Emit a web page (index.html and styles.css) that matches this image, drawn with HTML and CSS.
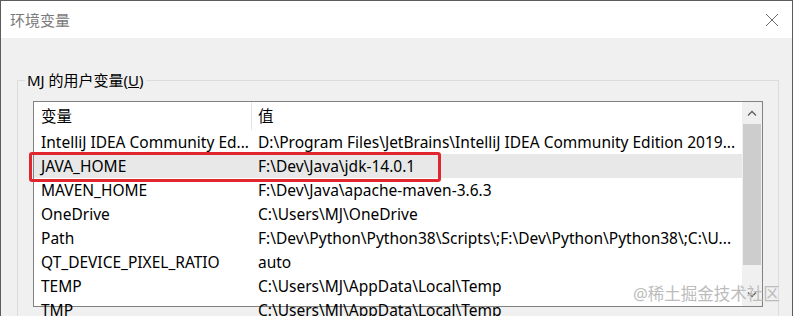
FILE: index.html
```html
<!DOCTYPE html>
<html lang="zh-CN">
<head>
  <meta charset="UTF-8" />
  <meta name="viewport" content="width=device-width, initial-scale=1.0" />
  <title>环境变量</title>
  <link rel="stylesheet" href="styles.css">
</head>
<body>
  <div class="window">
    <div class="titlebar">
      <span class="title">环境变量</span>
      <svg class="close" width="14" height="14" viewBox="0 0 14 14">
        <path d="M1 1 L13 13 M13 1 L1 13" stroke="#6b6b6b" stroke-width="1" fill="none" />
      </svg>
    </div>

    <div class="content">
      <fieldset class="group">
        <legend>MJ 的用户变量(<u>U</u>)</legend>

        <div class="listbox">
          <div class="table">
            <div class="row head">
              <div class="cell name">变量</div>
              <div class="cell value">值</div>
            </div>
            <div class="row">
              <div class="cell name">IntelliJ IDEA Community Ed...</div>
              <div class="cell value">D:\Program Files\JetBrains\IntelliJ IDEA Community Edition 2019...</div>
            </div>
            <div class="row selected">
              <div class="cell name">JAVA_HOME</div>
              <div class="cell value">F:\Dev\Java\jdk-14.0.1</div>
            </div>
            <div class="row">
              <div class="cell name">MAVEN_HOME</div>
              <div class="cell value">F:\Dev\Java\apache-maven-3.6.3</div>
            </div>
            <div class="row">
              <div class="cell name">OneDrive</div>
              <div class="cell value">C:\Users\MJ\OneDrive</div>
            </div>
            <div class="row">
              <div class="cell name">Path</div>
              <div class="cell value">F:\Dev\Python\Python38\Scripts\;F:\Dev\Python\Python38\;C:\U...</div>
            </div>
            <div class="row">
              <div class="cell name">QT_DEVICE_PIXEL_RATIO</div>
              <div class="cell value">auto</div>
            </div>
            <div class="row">
              <div class="cell name">TEMP</div>
              <div class="cell value">C:\Users\MJ\AppData\Local\Temp</div>
            </div>
            <div class="row">
              <div class="cell name">TMP</div>
              <div class="cell value">C:\Users\MJ\AppData\Local\Temp</div>
            </div>
          </div>

          <div class="scrollbar">
            <div class="arrow">
              <svg width="10" height="6" viewBox="0 0 10 6"><path d="M1 5.5 L5 1.5 L9 5.5" stroke="#606060" stroke-width="1.3" fill="none" /></svg>
            </div>
            <div class="track">
              <div class="thumb"></div>
            </div>
            <div class="arrow">
              <svg width="10" height="6" viewBox="0 0 10 6"><path d="M1 0.5 L5 4.5 L9 0.5" stroke="#606060" stroke-width="1.3" fill="none" /></svg>
            </div>
          </div>
        </div>
      </fieldset>
    </div>

    <div class="highlight"></div>
    <div class="watermark">@稀土掘金技术社区</div>
  </div>
</body>
</html>
```

FILE: styles.css
```css
body {
  margin: 0;
  background: #fff;
  font-family: "Noto Sans", "Noto Sans CJK SC", sans-serif;
  color: #000;
}
.window {
  position: relative;
  width: 791px;
  height: 315px;
  border: 1px solid #5c5c5c;
  border-bottom: none;
  background: #f0f0f0;
  overflow: hidden;
}
.titlebar {
  height: 37px;
  background: #fff;
  display: flex;
  align-items: center;
  justify-content: space-between;
  padding: 0 13px 0 9px;
}
.title {
  font-size: 15px;
  color: #7a7a7a;
}
.close { margin-top: 1px; }

.content {
  padding: 32px 13px 0 16px;
}
.group {
  margin: 0;
  padding: 0 15px 0 15px;
  border: 1px solid #dcdcdc;
  height: 260px;
}
.group legend {
  font-size: 15px;
  line-height: 20px;
  padding: 0 2px;
  margin-left: -8px;
}
.listbox {
  margin-top: 11px;
  height: 204px;
  border: 1px solid #828282;
  background: #fff;
  display: flex;
}
.table {
  flex: 1;
  font-size: 15.5px;
}
.row {
  display: flex;
  height: 24px;
  line-height: 22px;
  align-items: center;
  white-space: nowrap;
}
.row.head {
  height: 28px;
}
.row.selected { background: #e8e8e8; }
.cell { padding-left: 7px; }
.cell.name { width: 210px; }
.row.head .cell.value {
  border-left: 1px solid #e5e5e5;
  padding-left: 6px;
  height: 28px;
  line-height: 28px;
}
.scrollbar {
  width: 20px;
  background: #f0f0f0;
  display: flex;
  flex-direction: column;
}
.arrow {
  height: 22px;
  display: flex;
  align-items: center;
  justify-content: center;
}
.track {
  flex: 1;
  padding: 0 1px;
}
.thumb {
  height: 141px;
  background: #cdcdcd;
}
.highlight {
  position: absolute;
  left: 28px;
  top: 151px;
  width: 406px;
  height: 24px;
  border: 3px solid #e2262d;
  border-radius: 3px;
}
.watermark {
  position: absolute;
  left: 632px;
  top: 280px;
  font-size: 16.5px;
  color: #bcbcbc;
}
```
